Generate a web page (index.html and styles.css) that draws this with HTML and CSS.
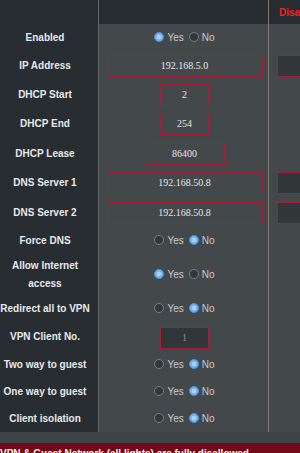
FILE: index.html
```html
<!DOCTYPE html>
<html>
<head>
<meta charset="utf-8">
<link rel="stylesheet" href="styles.css">
</head>
<body>
<div class="page">
  <div class="grid">
    <div class="th hd"></div>
    <div class="td hd"></div>
    <div class="tr hd"><span class="status">Disabled</span></div>

    <div class="th">Enabled</div>
    <div class="td"><span class="opt"><span class="dot on"></span>Yes</span><span class="opt"><span class="dot"></span>No</span></div>
    <div class="tr"></div>

    <div class="th">IP Address</div>
    <div class="td in"><div class="field wide">192.168.5.0</div></div>
    <div class="tr in"><div class="field side"></div></div>

    <div class="th">DHCP Start</div>
    <div class="td in"><div class="field short">2</div></div>
    <div class="tr"></div>

    <div class="th">DHCP End</div>
    <div class="td in"><div class="field short">254</div></div>
    <div class="tr"></div>

    <div class="th">DHCP Lease</div>
    <div class="td in"><div class="field mid">86400</div></div>
    <div class="tr"></div>

    <div class="th">DNS Server 1</div>
    <div class="td in"><div class="field wide">192.168.50.8</div></div>
    <div class="tr in"><div class="field side"></div></div>

    <div class="th">DNS Server 2</div>
    <div class="td in"><div class="field wide">192.168.50.8</div></div>
    <div class="tr in"><div class="field side"></div></div>

    <div class="th">Force DNS</div>
    <div class="td"><span class="opt"><span class="dot"></span>Yes</span><span class="opt"><span class="dot on"></span>No</span></div>
    <div class="tr"></div>

    <div class="th">Allow Internet access</div>
    <div class="td"><span class="opt"><span class="dot on"></span>Yes</span><span class="opt"><span class="dot"></span>No</span></div>
    <div class="tr"></div>

    <div class="th">Redirect all to VPN</div>
    <div class="td"><span class="opt"><span class="dot"></span>Yes</span><span class="opt"><span class="dot on"></span>No</span></div>
    <div class="tr"></div>

    <div class="th">VPN Client No.</div>
    <div class="td in vpn"><div class="field short off">1</div></div>
    <div class="tr"></div>

    <div class="th">Two way to guest</div>
    <div class="td"><span class="opt"><span class="dot"></span>Yes</span><span class="opt"><span class="dot on"></span>No</span></div>
    <div class="tr"></div>

    <div class="th">One way to guest</div>
    <div class="td"><span class="opt"><span class="dot"></span>Yes</span><span class="opt"><span class="dot on"></span>No</span></div>
    <div class="tr"></div>

    <div class="th">Client isolation</div>
    <div class="td"><span class="opt"><span class="dot"></span>Yes</span><span class="opt"><span class="dot on"></span>No</span></div>
    <div class="tr"></div>
  </div>
  <div class="gap"></div>
  <div class="banner">VPN &amp; Guest Network (all lights) are fully disallowed</div>
</div>
</body>
</html>
```

FILE: styles.css
```css
* { box-sizing: border-box; }
html, body {
  margin: 0;
  padding: 0;
  background: #3f4446;
  width: 300px;
  height: 453px;
  overflow: hidden;
}
.page {
  width: 300px;
  height: 453px;
  display: flex;
  flex-direction: column;
  font-family: "Liberation Sans", Arial, sans-serif;
}
.grid {
  display: grid;
  grid-template-columns: 99px 170px 1fr;
  grid-template-rows: 24px 27px 29px 29px 30px 29px 30px 29px 27px 41px 27px 29px 27px 27px 27px;
  width: 300px;
}
.th {
  background: #272d31;
  border-right: 1px solid #62676a;
  color: #e6e9eb;
  font-weight: bold;
  font-size: 10px;
  line-height: 18px;
  text-align: center;
  padding-right: 8px;
  display: flex;
  align-items: center;
  justify-content: center;
}
.td {
  background: #43484a;
  border-right: 1px solid #7d7a72;
  display: flex;
  align-items: center;
  justify-content: center;
  padding-left: 2px;
}
.tr {
  background: #43484a;
  display: flex;
  align-items: center;
  padding-left: 8px;
  overflow: hidden;
}
.in { align-items: flex-start; padding-top: 4px; }
.vpn { padding-top: 5px; }
.hd { background: #262c30; }
.status {
  color: #ec2424;
  font-weight: bold;
  font-size: 10px;
  padding-left: 2px;
  white-space: nowrap;
}
.opt {
  display: flex;
  align-items: center;
  color: #c9cbcc;
  font-size: 10px;
  margin-right: 5px;
}
.opt:last-child { margin-right: 0; }
.dot {
  width: 10px;
  height: 10px;
  border-radius: 50%;
  border: 1px solid #7a7d80;
  background: #333739;
  margin-right: 3px;
  position: relative;
  top: -1px;
}
.dot.on {
  border: 1px solid #4d8fe0;
  background: #a9d0fb;
  box-shadow: inset 0 0 0 1.5px #6eaaf2;
}
.field {
  height: 22px;
  border: 1px solid #a21f37;
  color: #e6e6e6;
  font-family: "Liberation Serif", "Times New Roman", serif;
  font-size: 10px;
  line-height: 20px;
  text-align: center;
}
.wide { width: 156px; }
.short { width: 49px; }
.mid { width: 80px; }
.side { width: 40px; background: #323739; flex-shrink: 0; }
.off { background: #313638; color: #8a8c8d; }
.gap { height: 11px; flex-shrink: 0; }
.banner {
  flex: 1;
  background: #720a18;
  color: #f2f2f2;
  font-weight: bold;
  font-size: 10px;
  line-height: 14px;
  padding-top: 4px;
  white-space: nowrap;
  overflow: hidden;
}
```
